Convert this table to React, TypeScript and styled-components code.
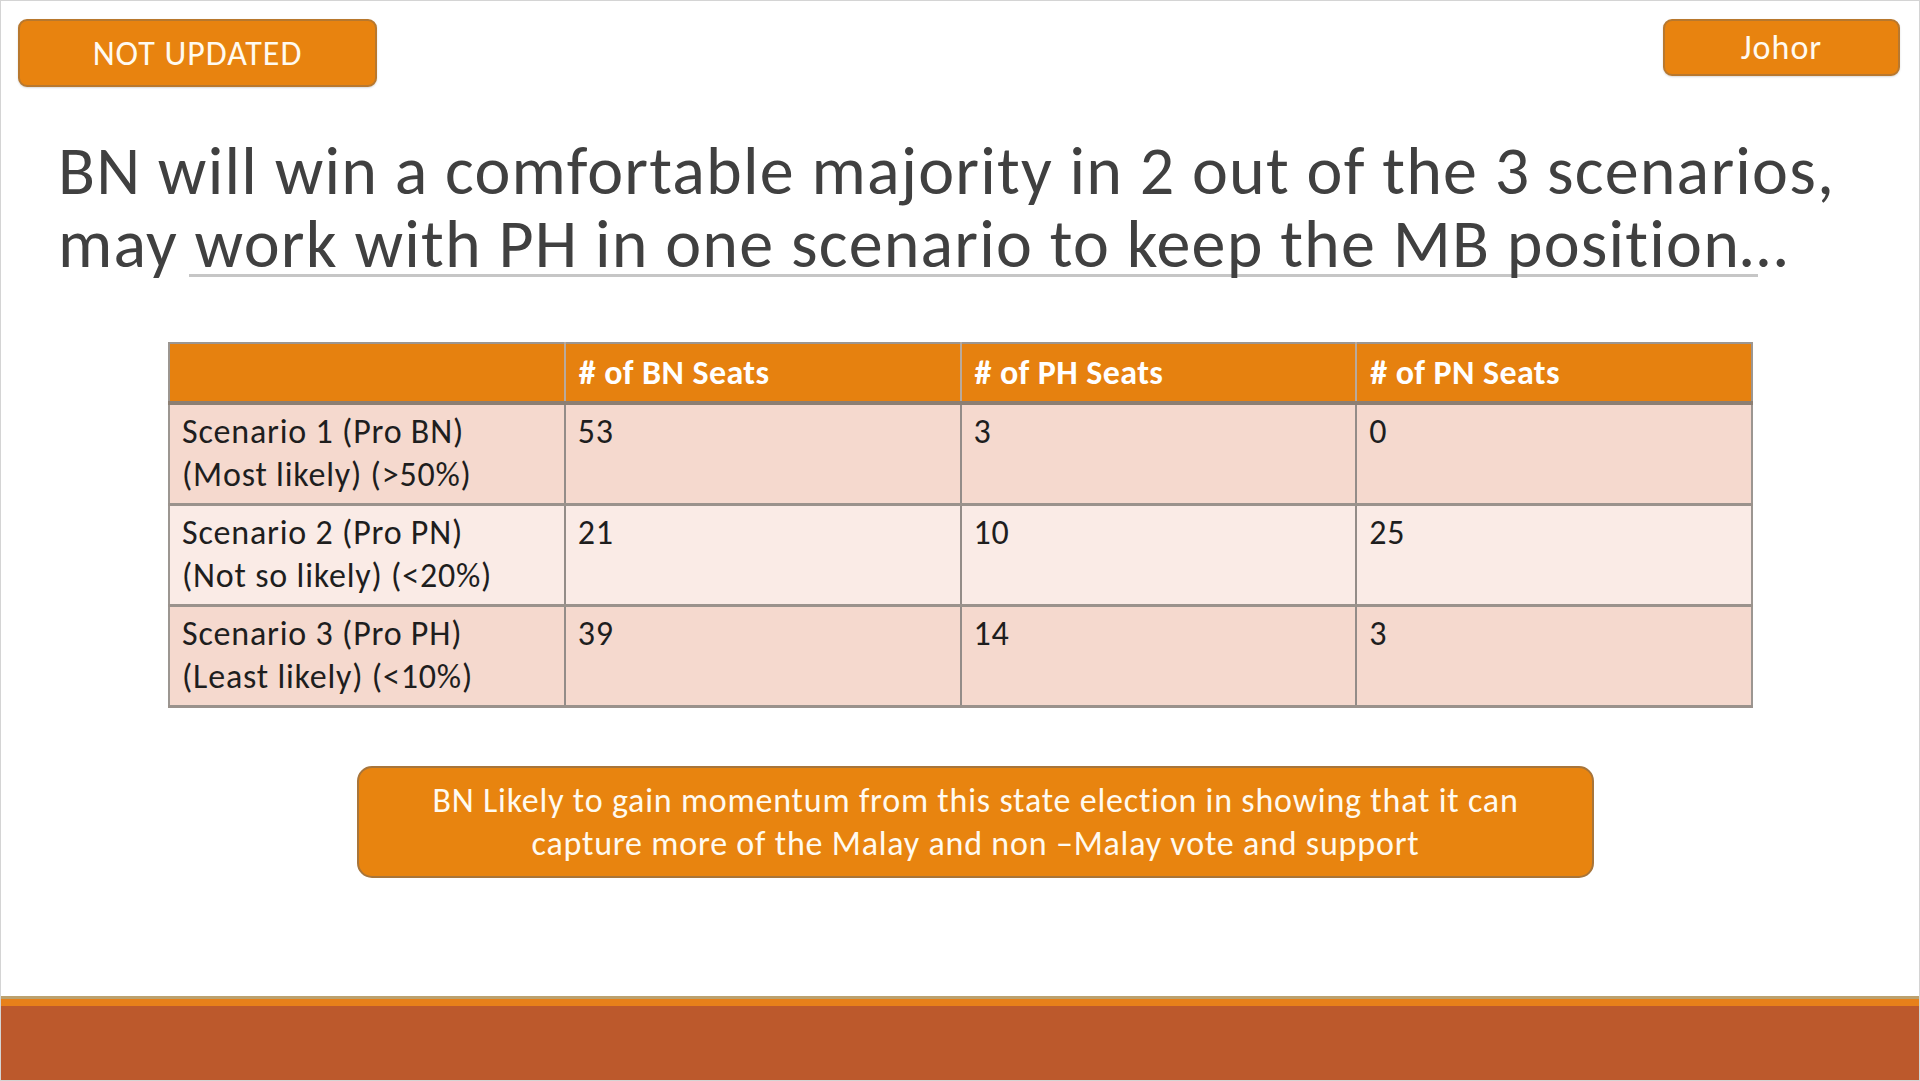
import React from "react";
import styled, { createGlobalStyle } from "styled-components";

const GlobalStyle = createGlobalStyle`
  html, body {
    margin: 0;
    padding: 0;
    background: #ffffff;
  }
  body {
    font-family: "Carlito", "Lato", "Liberation Sans", sans-serif;
  }
`;

const Slide = styled.div`
  width: 1920px;
  height: 1081px;
  box-sizing: border-box;
  border: 1px solid #d4d4d4;
  display: flex;
  flex-direction: column;
  background: #ffffff;
  overflow: hidden;
`;

const TopBar = styled.div`
  display: flex;
  justify-content: space-between;
  align-items: flex-start;
  padding: 18px 19px 0 17px;
`;

const Tag = styled.div<{ $w: number; $h: number }>`
  width: ${(p) => p.$w}px;
  height: ${(p) => p.$h}px;
  box-sizing: border-box;
  background: #e8830f;
  border: 2px solid #b8782e;
  border-radius: 9px;
  color: #fffaf0;
  font-size: 34px;
  letter-spacing: 1px;
  display: flex;
  align-items: center;
  justify-content: center;
  box-shadow: 0 1px 2px rgba(0, 0, 0, 0.15);
`;

const Title = styled.h1`
  margin: 47px 0 0 57px;
  font-weight: 400;
  font-size: 68px;
  line-height: 73px;
  letter-spacing: 1.2px;
  color: #404040;
`;

const Underlined = styled.span`
  margin: 0 -18px 0 -6px;
  padding: 0 18px 0 6px;
  background-image: linear-gradient(#c6c6c6, #c6c6c6);
  background-repeat: no-repeat;
  background-size: 100% 3px;
  background-position: 0 calc(100% - 8px);
`;

const Table = styled.table`
  margin: 62px 0 0 167px;
  width: 1585px;
  border-collapse: collapse;
  table-layout: fixed;
  border: 2px solid #9c9691;
  font-size: 34px;
  letter-spacing: 0.8px;
`;

const HeadCell = styled.th`
  height: 60px;
  box-sizing: border-box;
  background: #e6810f;
  color: #ffffff;
  font-weight: 700;
  text-align: left;
  padding: 0 13px;
  letter-spacing: 0.4px;
  border-left: 2px solid #b9aa9c;
  border-bottom: 4px solid #8c7f73;
  &:first-child {
    border-left: none;
  }
`;

const Row = styled.tr<{ $light: boolean }>`
  background: ${(p) => (p.$light ? "#faebe6" : "#f5d9ce")};
`;

const Cell = styled.td`
  height: 101px;
  box-sizing: border-box;
  vertical-align: top;
  padding: 5px 12px 0 12px;
  line-height: 43px;
  color: #1e1e1e;
  border-left: 2px solid #938c88;
  border-bottom: 3px solid #9a928c;
  &:first-child {
    border-left: none;
  }
`;

const Callout = styled.div`
  margin: 58px 0 0 356px;
  width: 1237px;
  height: 112px;
  box-sizing: border-box;
  background: #e8840f;
  border: 2px solid #a8753a;
  border-radius: 15px;
  color: #fffaf0;
  font-size: 34px;
  letter-spacing: 0.8px;
  line-height: 43px;
  text-align: center;
  display: flex;
  flex-direction: column;
  align-items: center;
  justify-content: center;
`;

const Spacer = styled.div`
  flex: 1;
`;

const Footer = styled.div`
  height: 84px;
  display: flex;
  flex-direction: column;
`;

const FooterStripe = styled.div`
  height: 7px;
  background: #e7801a;
  border-top: 3px solid #bba16e;
  box-shadow: 0 2px 2px rgba(120, 60, 20, 0.4);
`;

const FooterBand = styled.div`
  flex: 1;
  background: #bc592c;
`;

const headers = ["", "# of BN Seats", "# of PH Seats", "# of PN Seats"];

const rows = [
  { label: ["Scenario 1 (Pro BN)", "(Most likely) (>50%)"], values: ["53", "3", "0"] },
  { label: ["Scenario 2 (Pro PN)", "(Not so likely) (<20%)"], values: ["21", "10", "25"] },
  { label: ["Scenario 3 (Pro PH)", "(Least likely) (<10%)"], values: ["39", "14", "3"] },
];

export default function App() {
  return (
    <>
      <GlobalStyle />
      <Slide>
        <TopBar>
          <Tag $w={359} $h={68}>NOT UPDATED</Tag>
          <Tag $w={237} $h={57}>Johor</Tag>
        </TopBar>
        <Title>
          BN will win a comfortable majority in 2 out of the 3 scenarios,
          <br />
          may <Underlined>work with PH in one scenario to keep the MB position</Underlined>…
        </Title>
        <Table>
          <thead>
            <tr>
              {headers.map((h, i) => (
                <HeadCell key={i}>{h}</HeadCell>
              ))}
            </tr>
          </thead>
          <tbody>
            {rows.map((r, i) => (
              <Row key={i} $light={i === 1}>
                <Cell>
                  {r.label[0]}
                  <br />
                  {r.label[1]}
                </Cell>
                {r.values.map((v, j) => (
                  <Cell key={j}>{v}</Cell>
                ))}
              </Row>
            ))}
          </tbody>
        </Table>
        <Callout>
          <div>BN Likely to gain momentum from this state election in showing that it can</div>
          <div>capture more of the Malay and non –Malay vote and support</div>
        </Callout>
        <Spacer />
        <Footer>
          <FooterStripe />
          <FooterBand />
        </Footer>
      </Slide>
    </>
  );
}
